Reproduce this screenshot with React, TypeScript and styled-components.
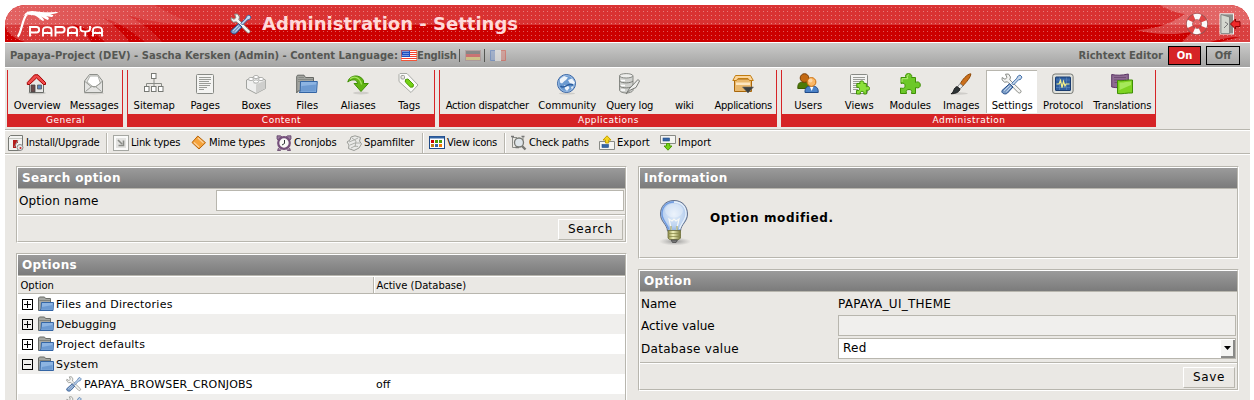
import React from 'react';
import styled, { createGlobalStyle } from 'styled-components';

const Global = createGlobalStyle`
  * { box-sizing: border-box; }
  html, body { margin: 0; background: #fff; height: 400px; overflow: hidden; }
  body { font-family: "DejaVu Sans", sans-serif; font-size: 10px; color: #000; }
`;

const RED = '#d62426';
const BG = '#eae8e4';
const LINE = '#b8b6ae';

const Page = styled.div`
  width: 1245px; height: 400px; margin: 0 0 0 5px; padding-top: 5px;
  display: flex; flex-direction: column; overflow: hidden;
`;
const Header = styled.header`
  height: 37px; flex: none; display: flex; align-items: center; position: relative;
  border-radius: 20px 20px 0 0; overflow: hidden; background: #c00;
`;
const HeaderArt = styled.svg`position: absolute; left: 0; top: 0;`;
const Logo = styled.svg`position: relative; margin: 0 0 3px 10px; flex: none;`;
const Title = styled.h1`
  position: relative; margin: 0 0 0 10px; font-size: 18px; line-height: 22px; font-weight: bold; color: #ffd9d9;
  white-space: nowrap;
`;
const HeaderIcon = styled.span<{ $ml: number }>`
  position: relative; display: flex; margin-left: ${p => p.$ml}px;
`;
const Spacer = styled.div`flex: 1;`;

const StatusBar = styled.div`
  margin-top: 1px; height: 24px; flex: none; display: flex; align-items: center; padding: 0 10px 0 5px;
  background: linear-gradient(#cbcbca, #a3a3a2); color: #555753; font-weight: bold;
`;
const Txt = styled.span<{ $w?: number; $ls?: number }>`
  white-space: nowrap; letter-spacing: ${p => p.$ls ?? 0}px; width: ${p => (p.$w ? p.$w + 'px' : 'auto')};
`;
const Bar = styled.span`width: 1px; height: 13px; background: #555753; margin: 0 5px 0 3px;`;
const Toggle = styled.button<{ $on?: boolean }>`
  width: ${p => (p.$on ? 33 : 34)}px; height: 19px; margin-left: 5px; padding: 0; border: 1px solid #000;
  background: ${p => (p.$on ? RED : 'transparent')}; color: ${p => (p.$on ? '#fff' : '#555753')};
  font: bold 10px "DejaVu Sans", sans-serif;
`;

const Nav = styled.nav`
  margin-top: 1px; height: 61px; flex: none; display: flex; align-items: flex-start; gap: 4px; padding: 2px 0 0 2px; background: ${BG};
`;
const Group = styled.section`
  height: 57px; display: flex; flex-direction: column; border: 1px solid ${RED}; border-width: 0 1px;
`;
const GroupItems = styled.div`display: flex; height: 44px;`;
const GroupLabel = styled.div`
  height: 13px; background: ${RED}; color: #fff; font-size: 9px; line-height: 12px; text-align: center; letter-spacing: 0.5px;
  padding-left: 1px;
`;
const Item = styled.a<{ $w: number; $active?: boolean }>`
  width: ${p => p.$w}px; height: ${p => (p.$active ? 43 : 44)}px; display: flex; flex-direction: column; align-items: center;
  padding-top: 3px; white-space: nowrap; line-height: 12px;
  ${p => p.$active && `background: #fff; box-shadow: inset 1px 1px 0 ${LINE};`}
  svg { margin-bottom: 5px; flex: none; }
`;
const ItemLabel = styled(Txt)`padding-left: 1.5px;`;

const Tools = styled.div`
  height: 26px; flex: none; display: flex; align-items: center; padding: 1px 0 0 3px; background: ${BG};
  border-top: 1px solid ${LINE}; border-bottom: 1px solid #fff; box-shadow: inset 0 1px 0 #fff, inset 0 -1px 0 ${LINE};
`;
const Tool = styled.a<{ $w: number }>`
  width: ${p => p.$w}px; display: flex; align-items: center; gap: 2px; white-space: nowrap;
`;
const Sep = styled.span`width: 2px; height: 20px; border-left: 1px solid ${LINE}; border-right: 1px solid #fff; margin-right: 5px;`;

const Main = styled.main`
  flex: 1; display: grid; grid-template-columns: 611px 601px; gap: 11px; padding: 11px; align-items: start;
  background: ${BG}; min-height: 0;
`;
const Column = styled.div`display: flex; flex-direction: column; gap: 10px;`;
const Panel = styled.section`
  border: 1px solid; border-color: ${LINE} #fff #fff ${LINE};
`;
const PanelBody = styled.div`
  border: 1px solid; border-color: #fff ${LINE} ${LINE} #fff;
`;
const PanelTitle = styled.h2`
  margin: 0; height: 21px; padding-left: 4px; background: linear-gradient(#9b9b9b, #7b7b7b);
  border-bottom: 1px solid ${LINE}; color: #fff; font-size: 12px; line-height: 20px; font-weight: bold; letter-spacing: 0.36px;
`;
const Row = styled.div<{ $h: number }>`
  display: flex; height: ${p => p.$h}px; font-size: 12px; padding: 0 1px; align-items: flex-start;
`;
const RowName = styled.label<{ $ls?: number }>`
  width: 197px; line-height: 16px; padding-top: 4px; letter-spacing: ${p => p.$ls ?? 0}px;
`;
const Field = styled.div<{ $off?: boolean }>`
  flex: 1; height: 21px; margin-top: 1px; border: 1px solid ${LINE}; background: ${p => (p.$off ? '#f0efed' : '#fff')};
`;
const Select = styled.div`
  flex: 1; height: 21px; margin-top: 1px; border: 1px solid ${LINE}; background: #fff; display: flex; justify-content: space-between;
  padding-left: 4px; line-height: 19px; letter-spacing: 0.3px;
`;
const Arrow = styled.span`
  width: 14px; height: 18px; margin-top: 1px; background: #f4f4f2; border-right: 2px solid #8a8a88; border-bottom: 2px solid #8a8a88;
  display: flex; align-items: center; justify-content: center;
`;
const Buttons = styled.div`
  height: 27px; border-top: 1px solid ${LINE}; box-shadow: inset 0 1px 0 #fff; display: flex; justify-content: flex-end; padding: 4px 2px 0 0;
`;
const Button = styled.button<{ $w: number }>`
  width: ${p => p.$w}px; height: 21px; padding: 0 0 2px; background: ${BG}; border: 1px solid; border-color: #fff ${LINE} ${LINE} #fff;
  font: 12px "DejaVu Sans", sans-serif; color: #000; letter-spacing: 0.6px;
`;
const Message = styled.div`height: 68px; display: flex; padding: 9px 0 0 10px;`;
const MessageText = styled.p`margin: 12px 0 0 12px; font-size: 12px; line-height: 16px; font-weight: bold; letter-spacing: 0.62px;`;

const ListHead = styled.div`
  display: flex; height: 18px; line-height: 18px; border-top: 1px solid #fff; border-bottom: 1px solid ${LINE};
`;
const HeadCell = styled.span<{ $w?: number }>`
  width: ${p => (p.$w ? p.$w + 'px' : 'auto')}; padding-left: 2.5px;
  ${p => p.$w ? `border-right: 1px solid ${LINE}; box-shadow: 1px 0 0 #fff;` : ''}
`;
const ListRow = styled.div<{ $odd?: boolean }>`
  height: 20px; display: flex; align-items: center; font-size: 11px; background: ${p => (p.$odd ? '#f0efed' : '#fff')};
`;
const NameCell = styled.div<{ $indent?: number }>`
  width: 358px; padding-left: ${p => p.$indent ?? 4}px; display: flex; align-items: center; white-space: nowrap; gap: 2px;
`;
const Expander = styled.svg`margin-right: 3px; flex: none;`;

type P = { s?: number; children?: React.ReactNode; v?: number };
const Ico = ({ s = 22, v = 22, children }: P) => (
  <svg width={s} height={s} viewBox={`0 0 ${v} ${v}`} fill="none">{children}</svg>
);

const ToolsIcon = ({ s = 22 }: P) => (
  <Ico s={s}>
    <path d="M4.500 1.200 7.500 1 9.500 4 8.800 6.800 19.800 17.500C20.800 19.200 19 20.800 17.300 19.700L6.500 8.800 3.500 9.200 1 6.800 1.200 4.500 4 6.300 6 4.500Z" fill="#f4f4f2" stroke="#888a85" />
    <path d="M19 2 21 4 19.500 6.500 17.500 6.800 12.500 12 10.800 10.300 16 5.200 16.500 3.500Z" fill="#c5d6ea" stroke="#3465a4" strokeWidth=".9" />
    <path d="M8.500 10.800 12 14 6.500 20C4.500 22 0 20.500 1 17.500Z" fill="#7b9cc6" stroke="#204a87" />
    <path d="M8.500 12.500 3 17.800M10 14 5.500 18.800" stroke="#c9daf0" />
  </Ico>
);
const House = () => (
  <Ico>
    <ellipse cx="11" cy="20" rx="9" ry="1.3" fill="#c8c6c2" />
    <path d="M3.500 10V19.500H17.500V10L10.500 4Z" fill="#e9e9e7" stroke="#6b6d69" />
    <path d="M1.300 11.500V9.500L8.500 1.800H12L19.500 9.500V11.500H17.500L10.500 5 3.500 11.500Z" fill="#ef4b4b" stroke="#a40000" />
    <path d="M5 12H9V19H5Z" fill="#6b4b4b" stroke="#444" strokeWidth=".8" />
    <path d="M11.500 12H15.500V16H11.500Z" fill="#5b86bd" stroke="#555" strokeWidth=".8" />
  </Ico>
);
const Mail = () => (
  <Ico>
    <ellipse cx="11" cy="20.4" rx="10" ry="1" fill="#d2d0cc" />
    <path d="M1.500 8 6.500 1.500H14.500L19.500 8V19.500H1.500Z" fill="#e4e4e2" stroke="#8d8f8a" />
    <path d="M4 9 7 3H15L17.500 10.500 11 14.500Z" fill="#fff" stroke="#b0b2ad" />
    <path d="M2 8.500 8.500 14M19 8.500 12.500 14M2.500 18.500 8.500 13.500H12.500L18.500 18.500" stroke="#9a9c97" />
  </Ico>
);
const Sitemap = () => (
  <Ico>
    <path d="M11 6V14M3.500 14V10.500H18.500V14" stroke="#888a85" />
    {[[8.500, .500], [1.500, 13.500], [8.500, 13.500], [15.500, 13.500]].map(([x, y]) => (
      <rect key={x + '-' + y} x={x} y={y} width="4.500" height="5" fill="#fff" stroke="#777974" />
    ))}
  </Ico>
);
const Doc = () => (
  <>
    <rect x="2.5" y="1.5" width="17" height="19" rx="1" fill="#f4f4f2" stroke="#888a85" />
    <path d="M5 4.5H17M5 6.5H17M5 8.5H15M5 10.5H17M5 12.5H16M5 14.5H13M5 16.5H10" stroke="#9a9c97" />
  </>
);
const Box = () => (
  <Ico>
    <path d="M1.500 7 11 3 20.500 7V15.500L11 20.500 1.500 15.500Z" fill="#efefee" stroke="#a0a29e" />
    <path d="M11 11.500V20.300L20.300 15.500V7.300Z" fill="#cfcfcd" />
    {[[11, 4], [6, 6], [16, 6], [11, 8.500]].map(([x, y]) => (
      <g key={x + '-' + y}><rect x={x - 2.500} y={y} width="5" height="2" fill="#d0d0ce" /><ellipse cx={x} cy={y} rx="2.500" ry="1.600" fill="#fff" stroke="#a5a6a3" strokeWidth=".8" /></g>
    ))}
  </Ico>
);
const FolderIcon = () => (
  <Ico>
    <path d="M.7 20V3.5L1.5 2.2H8L9.5 4.5H17.5V18H2Z" fill="#a3a5a0" stroke="#666864" />
    <path d="M2 6.5H17M2 8.5H17M2.5 4.5H8" stroke="#7f817c" strokeWidth=".8" />
    <path d="M4.5 8.5H21.3L20.5 19.5H3L4.2 18.5Z" fill="#8db4e2" stroke="#3465a4" />
    <path d="M5 17.5 5.5 13 20 11.5 19.5 18.5H5Z" fill="#6d9ad1" />
  </Ico>
);
const SmallFolder = ({ open }: { open?: boolean }) => (
  <Ico s={16} v={16}>
    <path d="M.5 14.500V2L1.500 1H6.500L7.500 2.500H12.500V14.500Z" fill="#a6a8a3" stroke="#6b6d69" />
    <path d="M1.500 4.500H12" stroke="#80827d" />
    <path d={open ? 'M2.500 5.500H15.500V14.500H2Z' : 'M3.500 6.500H15.500L15 14.500H1.500L3 13.500Z'} fill="#8db4e2" stroke="#3465a4" />
    <path d="M4 11 14.500 9V13.800H3.500Z" fill="#6d9ad1" />
  </Ico>
);
const Alias = () => (
  <Ico>
    <ellipse cx="14" cy="20" rx="8" ry="1.4" fill="#cfcdc9" />
    <path d="M.8 9C2 2 13 .5 16.5 7.5V10.5H21.3L14 18.5 7 10.5H10.5C10.5 6.5 5.500 5.500.8 9Z" fill="#62b514" stroke="#3f8f05" />
    <path d="M3 6C7 2.500 13 4 14.500 11.500" stroke="#a6e35f" strokeWidth="1.2" />
  </Ico>
);
const Tag = () => (
  <Ico>
    <path d="M1 1.500 2 .5H9L20 12 13 19.500 1 8.500Z" fill="#fafaf9" stroke="#a8aaa5" />
    <rect x="3" y="2.500" width="3.500" height="3.500" rx="1" fill="#eae8e4" stroke="#9a9c97" />
    <path d="M7.500 6.500 10 6 15.500 11.500 15 14 12.500 14.200 7.300 9Z" fill="#73d216" stroke="#4e9a06" />
  </Ico>
);
const Globe = () => (
  <Ico>
    <ellipse cx="11" cy="20.5" rx="8" ry="1" fill="#cfcdc9" />
    <circle cx="10.500" cy="10.500" r="9" fill="#6c9bd1" stroke="#3a66a4" />
    <circle cx="10.500" cy="10.500" r="8" stroke="#a6c4e8" strokeWidth=".8" />
    <path d="M4 6 8 3 12 4.5 10 7 8.5 8 6 10.5 4 9.5ZM12 7 16 5.5 19 9.5 17 12 14 10.5ZM8 12 12 12.5 13.5 15 11 18 9 16ZM15 14 17.5 13 16 16.5Z" fill="#eef4fa" />
    <path d="M4.500 13C8 17 12 9 17 12" stroke="#2c5fa0" strokeWidth="1.6" />
  </Ico>
);
const Database = () => (
  <Ico>
    <path d="M1.500 3V17.500C3 20.800 13.500 20.800 15 17.500V3Z" fill="#cfd0cd" stroke="#888a85" />
    <ellipse cx="8.200" cy="2.800" rx="6.700" ry="2.200" fill="#eeeeec" stroke="#888a85" />
    <path d="M1.500 8C4 10.500 12.500 10.500 15 8M1.500 13C4 15.500 12.500 15.500 15 13" stroke="#777974" />
    <path d="M3 7.500H7M3 12.500H7M3 17H7" stroke="#fff" strokeWidth="1.400" />
    <path d="M8 21 11.500 15.500 20 6.500 21.500 8 18 14.500 12.500 17Z" fill="#eeeeec" stroke="#777974" />
  </Ico>
);
const Package = () => (
  <Ico>
    <path d="M2.500 6H19.500V18.500H2.500Z" fill="#e9b96e" stroke="#a9660a" />
    <path d="M.8 7.500 3.500 2.500H18.500L21.300 7.500H17.500L16 5.500H6L4.500 7.500Z" fill="#fcd59a" stroke="#c17d11" />
    <path d="M4 9.500H18V12H4Z" fill="#fce6c0" />
    <path d="M10.500 14H21.500L16 20Z" fill="#3a3f40" stroke="#666" strokeWidth=".6" />
  </Ico>
);
const UsersIcon = () => (
  <Ico>
    <path d="M.8 15C.8 9.500 3 9 7 9S12 10 12 15V15.500H.8Z" fill="#4e7a06" stroke="#3c5a04" />
    <circle cx="7.500" cy="5" r="4.300" fill="#c46a12" stroke="#7c3f06" />
    <path d="M8 19.500C7.800 14.500 10 13 14.500 13S21.500 14.500 21.200 19.500Z" fill="#4b82c8" stroke="#204a87" />
    <path d="M12.800 13.500H16.500L14.700 18Z" fill="#fff" />
    <circle cx="14.500" cy="9" r="4.400" fill="#fbb765" stroke="#ce6f0a" />
    <circle cx="13.500" cy="7.500" r="2" fill="#fdd6a3" />
  </Ico>
);
const PUZZLE = 'M2 4.500H7C5.500 2 7.500 .6 9.500 .6S13.500 2 12.500 4.500H16.500V9.500C19 8 21.300 9.500 21.300 12S19.500 15.500 16.500 14.500V20.500H12.500C13.500 17.500 12 16.500 10 16.500S6.500 17.500 7.500 20.500H1.500V15C5.500 16 6 14.500 6 12.700S5 9.500 2 10.500Z';
const Views = () => (
  <Ico>
    <Doc />
    <g transform="translate(7.5 7.5) scale(.66)"><path d={PUZZLE} fill="#8be03a" stroke="#3f8f05" strokeWidth="1.5" /></g>
  </Ico>
);
const Puzzle = () => (
  <Ico>
    <path d={PUZZLE} fill="#6cc828" stroke="#3f8f05" />
    <path d="M3 9V5.700H8.800C7.500 2.500 8.500 1.800 10 1.800" stroke="#b2ec74" />
  </Ico>
);
const Brush = () => (
  <Ico>
    <ellipse cx="9" cy="20.5" rx="9" ry="1.2" fill="#cfcdc9" />
    <path d="M20.800 .8C17 1 12 7 10.200 11L12.800 13C16.500 9 21 4 20.800 .8Z" fill="#cb6f1b" stroke="#8f4a08" />
    <path d="M10 10.5 7.5 14 10 15.8 13 13Z" fill="#eeeeec" stroke="#777" strokeWidth=".8" />
    <path d="M7 13.5 10 16C9.5 19 6 20.8 1 20.8 4.5 19 3 15 7 13.5Z" fill="#2e3436" stroke="#111" strokeWidth=".8" />
  </Ico>
);
const Protocol = () => (
  <Ico>
    <rect x=".6" y="1" width="20.500" height="19.500" rx="2.500" fill="#dfe1dc" stroke="#777974" />
    <rect x="3.500" y="4" width="15" height="13.500" rx=".5" fill="#2f5f9f" stroke="#1a3c70" />
    <path d="M4 7H18M4 14.500H18M7.500 4.500V17M14.500 4.500V17" stroke="#5683bb" strokeWidth=".7" />
    <path d="M4.500 11H7L8.500 7.500 10 14.500 11.500 8.500 13 13 14 11H17.500" stroke="#f5f08a" strokeWidth="1.200" />
  </Ico>
);
const Translate = () => (
  <Ico>
    <path d="M.7 1.500C5 2.500 11 2.500 17.300 1V13.500C11 15 5 15 .7 14Z" fill="#8d6a91" stroke="#5c3566" />
    <path d="M3 4.500H15M3 7H15M3.500 9.500H8" stroke="#6f4d76" />
    <path d="M6.500 7.500C11 8.500 16 6.500 21.500 7V20C16 19.500 11 21.500 6.500 20.500Z" fill="#7ed321" stroke="#3f8f05" />
    <path d="M8.500 9.500C12 10 16 8.500 20 8.500V12L8.500 17Z" fill="#a6e85a" />
  </Ico>
);
const Lifebuoy = () => (
  <Ico>
    <circle cx="11" cy="11" r="7.500" stroke="#8a5555" strokeWidth="6.600" />
    <circle cx="11" cy="11" r="7.500" stroke="#e04545" strokeWidth="5.400" />
    <circle cx="11" cy="11" r="7.500" stroke="#fafafa" strokeWidth="5.400" strokeDasharray="6.200 5.580" strokeDashoffset="3.100" />
  </Ico>
);
const Exit = () => (
  <Ico>
    <rect x="1" y=".8" width="13.5" height="20.2" fill="#8c8e8a" stroke="#f2f2f0" />
    <path d="M2 1.5 10.5 4V20.5H2Z" fill="#d3d7cf" stroke="#666" strokeWidth=".6" />
    <path d="M6 9 9 11 5 15" stroke="#777" />
    <path d="M21 8.7H16.5V6L11.5 11 16.5 16V13.5H21Z" fill="#ef2929" stroke="#8f0000" />
  </Ico>
);
const Bulb = () => (
  <svg width="48" height="48" viewBox="0 0 48 48" fill="none">
    <defs>
      <radialGradient id="glass" cx=".5" cy=".45" r=".55"><stop offset="0" stopColor="#e4eefa" /><stop offset=".7" stopColor="#bdd3f0" /><stop offset="1" stopColor="#8fb2e0" /></radialGradient>
      <linearGradient id="base"><stop offset="0" stopColor="#8a8a45" /><stop offset=".4" stopColor="#f0f0b8" /><stop offset="1" stopColor="#77773a" /></linearGradient>
      <radialGradient id="shade"><stop offset="0" stopColor="#777" stopOpacity=".7" /><stop offset="1" stopColor="#888" stopOpacity="0" /></radialGradient>
    </defs>
    <ellipse cx="25" cy="43.500" rx="16" ry="4" fill="url(#shade)" />
    <path d="M24 2.500C15.500 2.500 10.500 8.500 10.500 16 10.500 24 17 26 17.500 33H30.500C31 26 37.500 24 37.500 16 37.500 8.500 32.500 2.500 24 2.500Z" fill="url(#glass)" stroke="#65718a" />
    <path d="M24 4C16.500 4 12 9 12 16 12 22 17 25 18.500 31" stroke="#6f9be0" strokeWidth="1.300" />
    <path d="M24 4C31.500 4 36 9 36 16 36 22 31 25 29.500 31" stroke="#e8f0fa" strokeWidth="1.300" />
    <ellipse cx="24" cy="12.500" rx="9" ry="7" fill="#fff" opacity=".3" />
    <path d="M21.500 32 19 21 22 23 24 21 26 23 29 21 26.500 32" stroke="#f7f8f5" strokeWidth="1.200" />
    <path d="M21 32V28M27 32V28" stroke="#9a9a50" />
    <path d="M18 32.500H30.500V40L29 41.500H19.500L18 40Z" fill="url(#base)" stroke="#6f6f3c" strokeWidth=".8" />
    <path d="M18 35.500H30.500M18 38.500H30.500" stroke="#8c8c4e" strokeWidth=".8" />
    <path d="M21 42H27.500L26 44.500H22.500Z" fill="#777" stroke="#444" strokeWidth=".7" />
  </svg>
);

const Install = () => (<Ico s={16} v={16}><path d="M.5 15.500V2.500L2.500 .5H14.500V13L12 15.500Z" fill="#f2f2f0" stroke="#777974" /><path d="M1 3.500H14" stroke="#c5c7c2" /><path d="M5 5H10V8H8V13H5Z" fill="#b51c1c" /><path d="M10 5 6.500 12" stroke="#999" /><circle cx="12" cy="12.500" r="3" fill="#e8e8e6" stroke="#888" /><circle cx="12.500" cy="13" r="1" fill="#c22" /></Ico>);
const LinkI = () => (<Ico s={16} v={16}><rect x=".5" y=".5" width="15" height="15" fill="#fafaf9" stroke="#a5a7a2" /><rect x="3" y="3" width="10" height="10" fill="#e2e2e0" /><path d="M5 5 9 9M10.500 5.500V10.500H5.500" stroke="#888a85" strokeWidth="1.600" /></Ico>);
const Mime = () => (<Ico s={16} v={16}><path d="M6.800 1 14.500 7.700 8 14 1 7.500Z" fill="#f5a33b" stroke="#b8640a" /><path d="M7 3 12.500 8M3 7.500 8 12" stroke="#fcd19a" strokeWidth="1.300" /></Ico>);
const Clock = () => (<Ico s={16} v={16}><path d="M1 4V.8H4.500L6 2 2 5ZM15 4V.8H11.500L10 2 14 5ZM2.500 13 1.500 15.500H4.500L5 14.500M13.500 13 14.500 15.500H11.500L11 14.500" fill="#9a7ba0" stroke="#55355c" strokeWidth=".7" /><circle cx="8" cy="8" r="5.800" fill="#f8f8f6" stroke="#75507b" strokeWidth="2.200" /><path d="M8.500 5V8.500L6 10" stroke="#2e3436" /></Ico>);
const Spam = () => (<Ico s={16} v={16}><path d="M1 7 4 5 5 2 9 .8 14.500 2.500 13.500 6 15.500 9 13 13 8 15.500 2.500 13.500 3 10Z" fill="#eaeae8" stroke="#9a9c97" /><path d="M3 7 8 5 12 3M4 10 9 8 14 8M5 13 9 11 12 11.500M6 3 10 6 9 12" stroke="#a5a7a2" strokeWidth=".9" /></Ico>);
const GridI = () => (<Ico s={16} v={16}><rect x=".5" y="1.500" width="15" height="12" fill="#fff" stroke="#204a87" /><path d="M1 2.500H15" stroke="#3465a4" strokeWidth="2" />{['#c00', '#4e9a06', '#4e9a06', '#c17d11', '#3465a4', '#f57900'].map((c, i) => <rect key={i} x={2 + (i % 3) * 4} y={5 + Math.floor(i / 3) * 4} width="3" height="3" fill={c} />)}</Ico>);
const Check = () => (<Ico s={16} v={16}><path d="M1.500 2V12.500H5M1.500 2.500H6M12 1V5" stroke="#8a8c87" /><path d="M0 1.500H3M4.500 12.500H8M10.500 1.500H13.500" stroke="#777" strokeWidth="1.500" /><circle cx="8" cy="7.500" r="4.500" fill="#dfe6ea" stroke="#777974" strokeWidth="1.300" /><path d="M11 11 14.500 14.500" stroke="#777974" strokeWidth="2.400" /></Ico>);
const ExportI = () => (<Ico s={16} v={16}><path d="M.5 6.500H15.500V14.500H.5Z" fill="#f4f4f2" stroke="#888a85" /><rect x="3" y="9.500" width="6.500" height="3" fill="#3465a4" stroke="#204a87" strokeWidth=".6" /><path d="M6.500 8V5H4L8 .8 12 5H9.700V8Z" fill="#f5d51e" stroke="#c4a000" /></Ico>);
const ImportI = () => (<Ico s={16} v={16}><path d="M.5 .5H15.500V8.500H.5Z" fill="#f4f4f2" stroke="#888a85" /><rect x="3" y="3" width="6.500" height="3" fill="#3465a4" stroke="#204a87" strokeWidth=".6" /><path d="M6.500 8.500V11H4L8 15.200 12 11H9.700V8.500Z" fill="#73d216" stroke="#4e9a06" /></Ico>);

const FlagUS = () => (<svg width="16" height="11" viewBox="0 0 16 11"><rect width="16" height="11" fill="#fff" />{[0, 2, 4, 6, 8, 10].map(y => <rect key={y} y={y} width="16" height="1" fill="#f5412f" />)}<rect width="9" height="7" fill="#1f4fc0" /><path d="M1.500 1.500H8M2.500 3.500H8M1.500 5.500H8" stroke="#cfe0ff" strokeDasharray="1 1" /><rect x=".5" y=".5" width="15" height="10" fill="none" stroke="#f4623f" strokeOpacity=".6" /></svg>);
const FlagDE = () => (<svg width="16" height="11" viewBox="0 0 16 11" opacity=".5"><rect width="16" height="4" fill="#555" /><rect y="4" width="16" height="3" fill="#d33" /><rect y="7" width="16" height="4" fill="#e8d060" /><rect x=".5" y=".5" width="15" height="10" fill="none" stroke="#a88" /></svg>);
const FlagFR = () => (<svg width="16" height="11" viewBox="0 0 16 11" opacity=".5"><rect width="6" height="11" fill="#8aa6d8" /><rect x="5" width="6" height="11" fill="#f4f4f4" /><rect x="11" width="5" height="11" fill="#e08a80" /><path d="M5 .5H.5V10.500H5" fill="none" stroke="#4a78c8" /><path d="M11 .5H15.500V10.500H11" fill="none" stroke="#e04a3a" /></svg>);

const PapayaLogo = () => (
  <Logo width="88" height="34" viewBox="0 0 88 34" fill="none">
    <path d="M2.500 31.500C6 30 7 15 11.500 9.500" stroke="#fff" strokeWidth="2.200" />
    <path d="M9 10C12 5.500 17 5.500 22 6.500 30 8 37 6.500 43.500 7 41 9 37 9 35 9.500 39 10 39 10.500 37 12 34 12 32 11 31 11 35 13 34 14 33 15 30 14.500 28 12 26 11.500 30 14.500 29 16 28 16 25 14.500 23 12 20 10.500 16 9.500 12 9.500 9 10Z" fill="#fff" />
    <g stroke="#fff" strokeWidth="1.900">
      <path d="M15 31.500V22H21.500C25 22 25 27.500 21.500 27.500H16" />
      <path d="M28 31.500V25C28 21.200 36.500 21.200 36.500 25V31.500M28 28H36.500" />
      <path d="M40.500 31.500V22H47C50.500 22 50.500 27.500 47 27.500H41" />
      <path d="M53 31.500V25C53 21.200 62 21.200 62 25V31.500M53 28H62" />
      <path d="M65.500 21V24C65.500 27.500 75 27.500 75 24V21M70.300 27V31.500" />
      <path d="M78 31.500V25C78 21.200 87 21.200 87 25V31.500M78 28H87" />
    </g>
  </Logo>
);

type Entry = [string, number, React.ComponentType, number?];

const groups: { label: string; items: Entry[] }[] = [
  { label: 'General', items: [['Overview', 57, House], ['Messages', 57, Mail]] },
  { label: 'Content', items: [['Sitemap', 51, Sitemap], ['Pages', 51, () => <Ico><Doc /></Ico>], ['Boxes', 51, Box], ['Files', 51, FolderIcon], ['Aliases', 51, Alias], ['Tags', 51, Tag]] },
  { label: 'Applications', items: [['Action dispatcher', 93, Ico, -0.24], ['Community', 67, Globe], ['Query log', 58, Database, -0.2], ['wiki', 51, Ico, -0.3], ['Applications', 67, Package, -0.3]] },
  { label: 'Administration', items: [['Users', 51, UsersIcon], ['Views', 51, Views], ['Modules', 51, Puzzle], ['Images', 51, Brush], ['Settings', 51, ToolsIcon], ['Protocol', 51, Protocol], ['Translations', 67, Translate, -0.15]] },
];

const toolItems: (Entry | null)[] = [
  ['Install/Upgrade', 98, Install, -0.18], null, ['Link types', 78, LinkI, -0.2], ['Mime types', 85, Mime, -0.2], ['Cronjobs', 70, Clock, -0.15], ['Spamfilter', 76, Spam, -0.15],
  null, ['View icons', 75, GridI, -0.28], null, ['Check paths', 88, Check, -0.2], ['Export', 61, ExportI], ['Import', 60, ImportI],
];

const Exp = ({ open }: { open?: boolean }) => (
  <Expander width="11" height="11" viewBox="0 0 11 11" fill="none">
    <rect x=".5" y=".5" width="10" height="10" stroke="#000" />
    <path d={open ? 'M2 5.500H9' : 'M2 5.500H9M5.500 2V9'} stroke="#000" />
  </Expander>
);

export default function App() {
  return (
    <>
      <Global />
      <Page>
        <Header>
          <HeaderArt width="1245" height="37">
            <defs>
              <pattern id="dots" width="4" height="4" patternUnits="userSpaceOnUse"><rect x="2" y="2" width="1" height="1" fill="#fff" opacity=".36" /></pattern>
              <linearGradient id="wing"><stop offset="0" stopColor="#fff" stopOpacity=".24" /><stop offset="1" stopColor="#fff" stopOpacity=".06" /></linearGradient>
            </defs>
            <rect width="1245" height="20" fill="#d93232" />
            <path d="M0 0H150C165 9 180 17 198 19 180 22 140 16 122 10 140 20 150 28 157 37H140C125 25 112 16 98 13 112 22 120 30 124 37H100C90 28 80 22 66 19 78 26 84 32 86 37H20C8 34 0 25 0 20Z" fill="url(#wing)" />
            <path d="M1245 0H1155C1162 4 1170 8 1180 9 1165 20 1145 25 1130 25 1150 30 1170 30 1187 27L1177 37H1205C1215 34 1225 32 1235 32L1215 37H1245Z" fill="#fff" opacity=".25" />
            <rect width="1245" height="37" fill="url(#dots)" />
          </HeaderArt>
          <PapayaLogo />
          <HeaderIcon $ml={127}><ToolsIcon /></HeaderIcon>
          <Title>Administration - Settings</Title>
          <Spacer />
          <HeaderIcon $ml={0}><Lifebuoy /></HeaderIcon>
          <HeaderIcon $ml={11}><Exit /></HeaderIcon>
          <HeaderIcon $ml={9} />
        </Header>
        <StatusBar>
          <Txt $w={391} $ls={0.01}>Papaya-Project (DEV) - Sascha Kersken (Admin) - Content Language:</Txt>
          <FlagUS /><Txt $w={39} $ls={-0.2}>English</Txt><Bar /><FlagDE /><Bar /><FlagFR />
          <Spacer />
          <Txt>Richtext Editor</Txt>
          <Toggle $on>On</Toggle><Toggle>Off</Toggle>
        </StatusBar>
        <Nav>
          {groups.map(g => (
            <Group key={g.label}>
              <GroupItems>
                {g.items.map(([name, w, Icon, ls]) => (
                  <Item key={name} $w={w} $active={name === 'Settings'}><Icon /><ItemLabel $ls={ls}>{name}</ItemLabel></Item>
                ))}
              </GroupItems>
              <GroupLabel>{g.label}</GroupLabel>
            </Group>
          ))}
        </Nav>
        <Tools>
          {toolItems.map((t, i) => {
            if (!t) return <Sep key={i} />;
            const [name, w, Icon, ls] = t;
            return <Tool key={i} $w={w}><Icon /><Txt $ls={ls}>{name}</Txt></Tool>;
          })}
        </Tools>
        <Main>
          <Column>
            <Panel><PanelBody>
              <PanelTitle>Search option</PanelTitle>
              <Row $h={25}><RowName $ls={0.15}>Option name</RowName><Field /></Row>
              <Buttons><Button $w={65}>Search</Button></Buttons>
            </PanelBody></Panel>
            <Panel><PanelBody>
              <PanelTitle>Options</PanelTitle>
              <ListHead><HeadCell $w={356}>Option</HeadCell><HeadCell>Active (Database)</HeadCell></ListHead>
              <ListRow><NameCell><Exp /><SmallFolder /><Txt $ls={0.24}>Files and Directories</Txt></NameCell></ListRow>
              <ListRow $odd><NameCell><Exp /><SmallFolder /><Txt>Debugging</Txt></NameCell></ListRow>
              <ListRow><NameCell><Exp /><SmallFolder /><Txt $ls={0.22}>Project defaults</Txt></NameCell></ListRow>
              <ListRow $odd><NameCell><Exp open /><SmallFolder open /><Txt $ls={0.25}>System</Txt></NameCell></ListRow>
              <ListRow><NameCell $indent={48}><ToolsIcon s={16} /><Txt $ls={0.15}>PAPAYA_BROWSER_CRONJOBS</Txt></NameCell><Txt>off</Txt></ListRow>
              <ListRow $odd><NameCell $indent={48}><ToolsIcon s={16} /></NameCell></ListRow>
            </PanelBody></Panel>
          </Column>
          <Column>
            <Panel><PanelBody>
              <PanelTitle>Information</PanelTitle>
              <Message><Bulb /><MessageText>Option modified.</MessageText></Message>
            </PanelBody></Panel>
            <Panel><PanelBody>
              <PanelTitle>Option</PanelTitle>
              <Row $h={22}><RowName>Name</RowName><RowName as="span" $ls={0.26}>PAPAYA_UI_THEME</RowName></Row>
              <Row $h={23}><RowName>Active value</RowName><Field $off /></Row>
              <Row $h={25}><RowName $ls={0.3}>Database value</RowName>
                <Select>Red<Arrow><svg width="7" height="4"><path d="M0 0H7L3.500 4Z" fill="#000" /></svg></Arrow></Select></Row>
              <Buttons><Button $w={52}>Save</Button></Buttons>
            </PanelBody></Panel>
          </Column>
        </Main>
      </Page>
    </>
  );
}
